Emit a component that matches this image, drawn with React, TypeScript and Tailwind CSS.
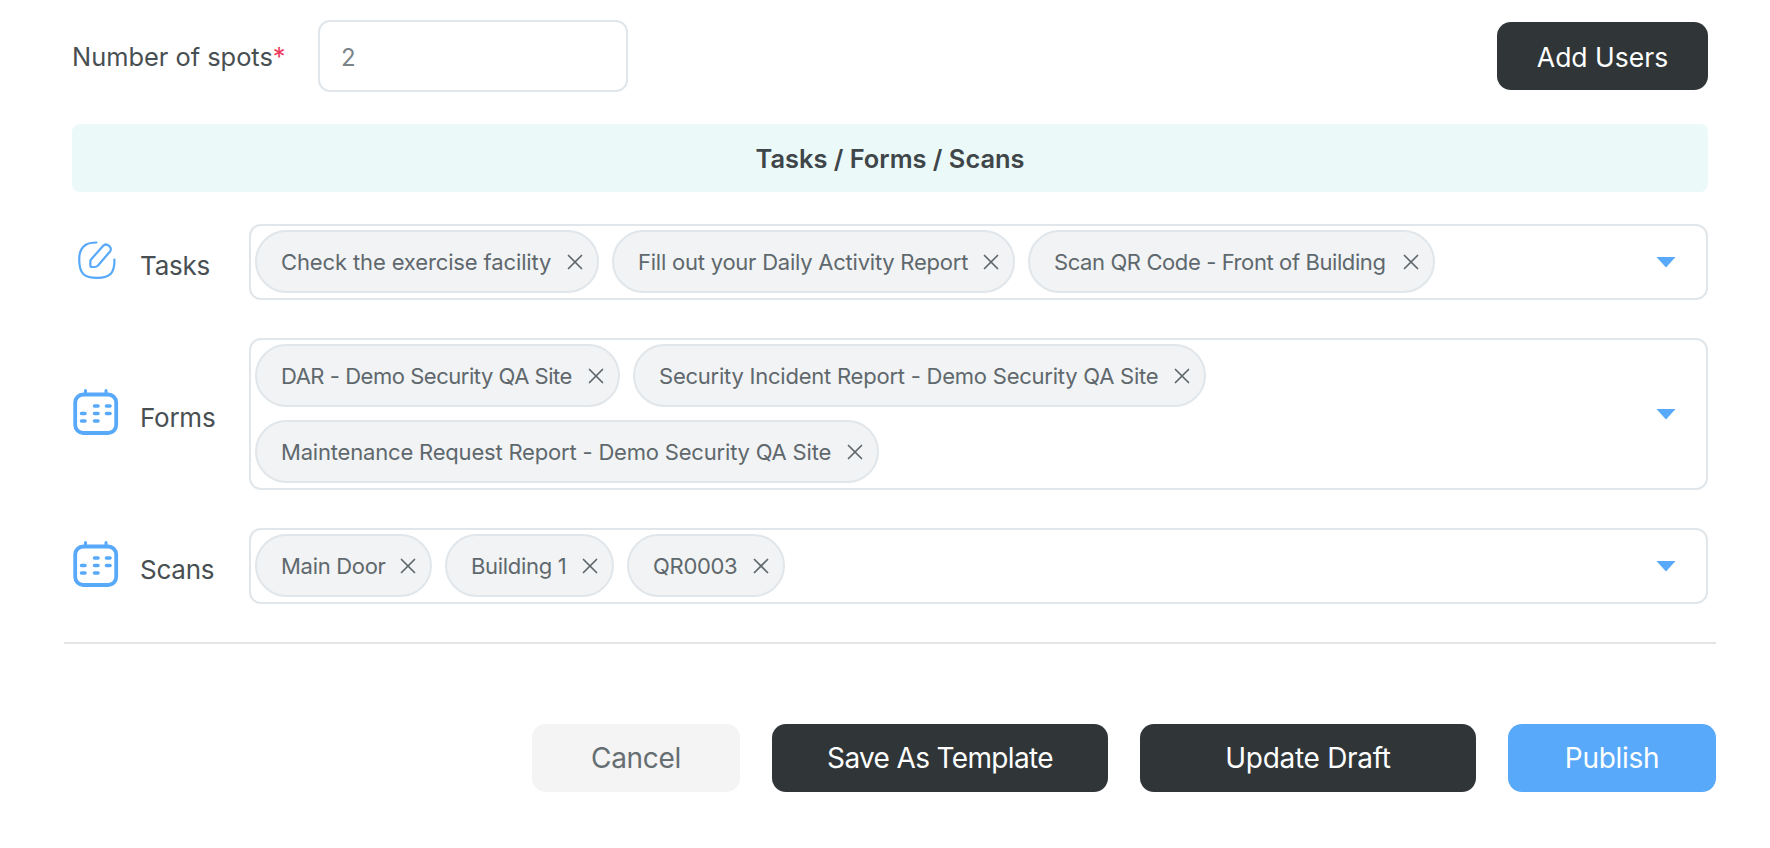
import React from "react";
import { X } from "lucide-react";

const rows = [
  {
    label: "Tasks",
    icon: "edit",
    chips: [
      { text: "Check the exercise facility", size: "w-[344px] tracking-[-0.13px]" },
      { text: "Fill out your Daily Activity Report", size: "w-[403px] tracking-[-0.23px]" },
      { text: "Scan QR Code - Front of Building", size: "w-[407px] tracking-[-0.4px]" },
    ],
  },
  {
    label: "Forms",
    icon: "calendar",
    chips: [
      { text: "DAR - Demo Security QA Site", size: "w-[365px] tracking-[-0.47px]" },
      { text: "Security Incident Report - Demo Security QA Site", size: "w-[573px] tracking-[-0.23px]" },
      { text: "Maintenance Request Report - Demo Security QA Site", size: "w-[624px] tracking-[-0.19px]" },
    ],
  },
  {
    label: "Scans",
    icon: "calendar",
    chips: [
      { text: "Main Door", size: "w-[177px] tracking-[-0.3px]" },
      { text: "Building 1", size: "w-[169px] tracking-[-0.3px]" },
      { text: "QR0003", size: "w-[158px] tracking-[-0.3px]" },
    ],
  },
];

const EditIcon = () => (
  <svg width="38" height="38" viewBox="0 0 38 38" fill="none" stroke="#58a9f9" strokeWidth="2.2" strokeLinecap="round" strokeLinejoin="round">
    <path d="M18.5 1.5C14 1.5 10.5 2 7.5 4C3 7 1.2 11.5 1.2 18C1.2 25 2 30 5.5 33.2C9 36.4 14 36.8 19 36.8C25 36.8 30 36 33 32.5C36 29 36.6 24 36.4 18.5" />
    <path d="M13 18.5L25 5C26.5 3.4 29 3.2 31 4.8C33 6.4 33.4 8.8 32 10.5L20 24.5C19 25.5 17.8 26 16.5 26L14 26C13 26 12.3 25.3 12.3 24.3L12.3 21C12.3 20 12.5 19.2 13 18.5Z" />
  </svg>
);

const CalendarIcon = () => (
  <svg width="46" height="46" viewBox="0 0 46 46" fill="none" stroke="#58a9f9" strokeLinecap="round">
    <rect x="2.2" y="5.5" width="41" height="38.5" rx="8" strokeWidth="3.8" />
    <path d="M12.5 1.5V5M33 1.5V5" strokeWidth="3" />
    <path d="M21.5 17H25M33.5 17H37M8.5 24.5H12M21.5 24.5H25M33.5 24.5H37M8.5 32H12M21.5 32H25" strokeWidth="3.6" />
  </svg>
);

const Chip = ({ text, size }: { text: string; size: string }) => (
  <span className={`flex h-[63px] items-center justify-between rounded-full border-2 border-[#e1e6ea] bg-[#f1f3f5] pl-[24px] pr-[9px] text-[22px] text-[#5f686c] ${size}`}>
    <span className="pt-[1px]">{text}</span>
    <X size={26} strokeWidth={1.6} className="text-[#5f686c]" />
  </span>
);

export default function App() {
  return (
    <div className="min-h-screen bg-white pl-[64px] pr-[54px] pt-5 font-['Inter',sans-serif]">
      <div className="px-2">
        <div className="flex items-center">
          <label className="w-[246px] pt-[2px] text-[25.4px] text-[#484f52]">
            Number of spots<span className="text-[#ee3b5c]">*</span>
          </label>
          <input
            readOnly
            value="2"
            className="h-[72px] w-[310px] rounded-xl border-2 border-[#e1e6ea] bg-white px-[21px] pt-[2px] text-[24px] text-[#7b8488] outline-none"
          />
          <button className="ml-auto h-[68px] w-[211px] rounded-[14px] bg-[#303538] pt-[3px] text-[26.5px] text-white">Add Users</button>
        </div>

        <div className="mt-8 flex h-[68px] items-center justify-center rounded-lg bg-[#ecf9f9] pt-[2px] text-[25.4px] font-semibold text-[#3f4649]">
          Tasks / Forms / Scans
        </div>

        <div className="mt-8 flex flex-col gap-[38px]">
          {rows.map((row) => (
            <div key={row.label} className="flex items-center">
              <div className="flex w-[177px] shrink-0 items-center">
                <div className="flex w-[68px] shrink-0 -translate-y-[2px] items-center pl-[1px]">
                  {row.icon === "edit" ? <div className="pl-[5px]"><EditIcon /></div> : <CalendarIcon />}
                </div>
                <span className="mt-[6px] text-[26px] tracking-[-0.25px] text-[#484f52]">{row.label}</span>
              </div>
              <div className="flex min-w-0 flex-1 items-center rounded-xl border-2 border-[#e1e6ea] pb-[5px] pl-1 pr-[30px] pt-1">
                <div className="flex flex-1 flex-wrap gap-[13px] self-start">
                  {row.chips.map((chip) => (
                    <Chip key={chip.text} text={chip.text} size={chip.size} />
                  ))}
                </div>
                <svg className="mt-[1px]" width="20" height="11" viewBox="0 0 20 11" fill="#58a9f9">
                  <path d="M0.5 0H19.5L10 10.5Z" />
                </svg>
              </div>
            </div>
          ))}
        </div>
      </div>

      <div className="mt-[38px] h-[2px] bg-[#e5e5e5]" />

      <div className="mt-20 flex justify-end gap-8 text-[28px] tracking-[-0.3px]">
        <button className="h-[68px] w-[208px] rounded-[14px] bg-[#f4f4f4] text-[#666e72]">Cancel</button>
        <button className="h-[68px] w-[336px] rounded-[14px] bg-[#303538] tracking-[-0.65px] text-white">Save As Template</button>
        <button className="h-[68px] w-[336px] rounded-[14px] bg-[#303538] text-white">Update Draft</button>
        <button className="h-[68px] w-[208px] rounded-[14px] bg-[#58a9f9] text-white">Publish</button>
      </div>
    </div>
  );
}
